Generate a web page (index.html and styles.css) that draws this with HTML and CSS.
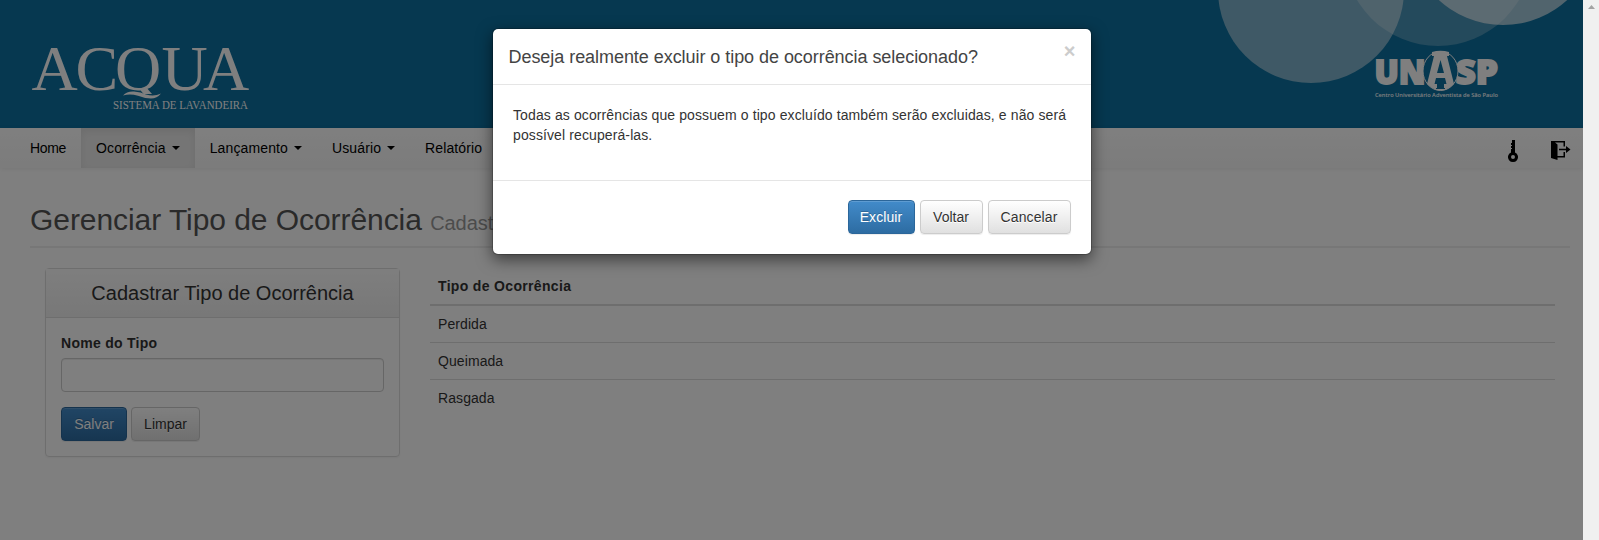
FILE: index.html
```html
<!DOCTYPE html>
<html lang="pt-BR">
<head>
<meta charset="utf-8">
<title>Acqua - Sistema de Lavandeira</title>
<link rel="stylesheet" href="styles.css">
</head>
<body>
<div class="page">
  <header class="banner">
    <svg class="banner-art" width="1583" height="128" viewBox="0 0 1583 128">
      <clipPath id="wordmark"><path d="M0 0h300v94H0z"/></clipPath>
      <circle cx="1311" cy="-10" r="93" fill="#fff" fill-opacity=".47"/>
      <circle cx="1438" cy="-48.3" r="94.3" fill="#fff" fill-opacity=".25"/>
      <circle cx="1503" cy="-70" r="95" fill="#fff" fill-opacity=".62"/>
      <g class="acqua" fill="#fff">
        <text x="31.500 75.500 115 161.500 203" y="90" font-size="64" clip-path="url(#wordmark)">ACQUA</text>
        <path d="M123 95.500q4-4.500 11-4 7 .5 12 3 8 2.500 15-1-4 5-10 5-6 0-13-2.800-8-2.500-15-.2z"/>
        <text x="113" y="108.500" font-size="12" textLength="135" lengthAdjust="spacingAndGlyphs">SISTEMA DE LAVANDEIRA</text>
      </g>
      <g class="unasp" fill="#fff">
        <text x="1374.500" y="83.500" font-size="33" textLength="51" lengthAdjust="spacingAndGlyphs" stroke="#fff" stroke-width="1.800">UN</text>
        <text x="1455.500" y="83.500" font-size="33" textLength="42.500" lengthAdjust="spacingAndGlyphs" stroke="#fff" stroke-width="1.800">SP</text>
        <ellipse cx="1440.500" cy="71" rx="17.500" ry="19.500" fill="#0c70a0" stroke="#fff"/>
        <path fill-rule="evenodd" d="M1432 52q8.500-2.500 17 0v4h-2l7 28-1 1q-12 11-25 0l-1-1 7-28h-2zM1440.500 60l-3.500 13h7zM1436 78l-1.500 6h2.500v4h-1v1h9v-1h-1v-4h2.500l-1.500-6z"/>
        <text class="unasp-sub" x="1375" y="97" font-size="5.500" textLength="123" lengthAdjust="spacingAndGlyphs">Centro Universitário Adventista de São Paulo</text>
      </g>
    </svg>
  </header>
  <nav class="navbar">
    <a class="nav-item home">Home</a>
    <a class="nav-item active">Ocorrência<b class="caret"></b></a>
    <a class="nav-item">Lançamento<b class="caret"></b></a>
    <a class="nav-item">Usuário<b class="caret"></b></a>
    <a class="nav-item">Relatório</a>
    <div class="nav-icons">
      <svg width="10" height="23" viewBox="0 0 10 23"><path fill-rule="evenodd" d="M4 0h3v12.500a5 5 0 1 1-4 0V9h1V8H3V6h1V5H3V3h1zM5 15a2 2 0 1 0 0 4 2 2 0 0 0 0-4z"/></svg>
      <svg class="exit" width="20" height="20" viewBox="0 0 20 20"><path d="M0 0h14v5.500h-1.500V1.500H4l2.500 2V19L0 17zM6 15h6.500v-4H14v5.500H6zM8 7.700h7V5l4.500 3.500L15 12V9.300H8z"/></svg>
    </div>
  </nav>
  <main class="content">
    <h1 class="page-title">Gerenciar Tipo de Ocorrência <small>Cadastrar</small></h1>
    <div class="row">
      <section class="panel">
        <h2 class="panel-title">Cadastrar Tipo de Ocorrência</h2>
        <form class="panel-body">
          <label class="label" for="nome">Nome do Tipo</label>
          <input class="input" id="nome" type="text">
          <div class="actions">
            <button class="btn primary salvar" type="button">Salvar</button>
            <button class="btn limpar" type="button">Limpar</button>
          </div>
        </form>
      </section>
      <div class="list">
        <div class="list-head">Tipo de Ocorrência</div>
        <div class="list-row first">Perdida</div>
        <div class="list-row">Queimada</div>
        <div class="list-row">Rasgada</div>
      </div>
    </div>
  </main>
</div>
<aside class="scrollbar"><i class="scroll-up"></i></aside>
<div class="backdrop"></div>
<div class="modal-layer">
  <div class="modal">
    <div class="modal-header">
      <h4 class="modal-title">Deseja realmente excluir o tipo de ocorrência selecionado?</h4>
      <button class="close" type="button">×</button>
    </div>
    <div class="modal-body">Todas as ocorrências que possuem o tipo excluído também serão excluidas, e não será<br>possível recuperá-las.</div>
    <div class="modal-footer">
      <button class="btn primary excluir" type="button">Excluir</button>
      <button class="btn voltar" type="button">Voltar</button>
      <button class="btn cancelar" type="button">Cancelar</button>
    </div>
  </div>
</div>
</body>
</html>
```
FILE: styles.css
```css
* { box-sizing: border-box; }
html, body { margin: 0; height: 100%; overflow: hidden; }
body {
  display: flex;
  background: #fff;
  color: #333;
  font: 14px/20px "Liberation Sans", Arial, sans-serif;
}
.page { width: 1583px; height: 540px; }
.banner { height: 128px; background: #0c70a0; }
.banner-art { display: block; }
.acqua { font-family: "Liberation Serif", serif; }
.unasp { font-family: "Open Sans", sans-serif; font-weight: 800; }
.unasp-sub { font-weight: 600; }

.navbar {
  display: flex;
  height: 40px;
  padding-left: 15px;
  background: linear-gradient(#fff, #f8f8f8);
  box-shadow: 0 1px 5px rgba(0, 0, 0, .075);
}
.nav-item {
  display: flex;
  align-items: center;
  padding: 0 15px;
  color: #000;
  letter-spacing: .12px;
  white-space: nowrap;
}
.nav-item.home { letter-spacing: -.33px; }
.nav-item.active { background: #ebebeb; box-shadow: inset 0 3px 9px rgba(0, 0, 0, .075); }
.caret {
  margin-left: 6px;
  border: 4px solid transparent;
  border-top-color: #000;
  border-bottom: 0;
}
.nav-icons { display: flex; gap: 33px; margin-left: auto; padding: 12px 12px 0 0; }
.exit { margin-top: 1px; }

.content { padding: 0 13px 0 30px; }
.page-title {
  height: 80px;
  margin: 0 0 20px;
  padding-top: 35px;
  border-bottom: 2px solid #eee;
  color: #555;
  font-size: 30px;
  font-weight: 400;
  letter-spacing: -.06px;
  line-height: 33px;
  white-space: nowrap;
}
.page-title small { color: #999; font-size: 20px; }
.row { display: flex; gap: 30px; padding: 0 15px; }
.panel {
  width: 355px;
  height: 189px;
  border: 1px solid #ddd;
  border-radius: 4px;
  box-shadow: 0 1px 2px rgba(0, 0, 0, .05);
}
.panel-title {
  height: 49px;
  margin: 0;
  border-bottom: 1px solid #ddd;
  background: linear-gradient(#fdfdfd, #f0f0f0);
  font-size: 20px;
  font-weight: 400;
  line-height: 49px;
  text-align: center;
}
.panel-body { padding: 15px; }
.label { display: block; margin-bottom: 5px; font-weight: 700; letter-spacing: .27px; }
.input {
  display: block;
  width: 100%;
  height: 34px;
  border: 1px solid #ccc;
  border-radius: 4px;
  background: #fff;
  box-shadow: inset 0 1px 1px rgba(0, 0, 0, .075);
}
.actions { display: flex; gap: 4px; margin-top: 15px; }
.btn {
  height: 34px;
  padding: 0;
  border: 1px solid #ccc;
  border-radius: 4px;
  background: linear-gradient(#fff, #e0e0e0);
  box-shadow: inset 0 1px 0 rgba(255, 255, 255, .15), 0 1px 1px rgba(0, 0, 0, .075);
  color: #333;
  font: 14px/20px "Liberation Sans", Arial, sans-serif;
  text-shadow: 0 1px 0 #fff;
}
.btn.primary {
  border-color: #2b669a;
  background: linear-gradient(#428bca, #2d6ca2);
  color: #fff;
  text-shadow: 0 -1px 0 rgba(0, 0, 0, .2);
}
.salvar { width: 66px; }
.limpar { width: 69px; }
.list { flex: 1; }
.list-head { height: 36px; padding: 8px; font-weight: 700; letter-spacing: .33px; }
.list-row { height: 37px; padding: 8px; border-top: 1px solid #ddd; letter-spacing: .08px; }
.list-row.first { height: 38px; border-top-width: 2px; }

.scrollbar { width: 16px; padding: 5px 0 0 5px; background: #f0f0f0; }
.scroll-up {
  display: block;
  width: 7px;
  height: 4px;
  background: #a3a3a3;
  clip-path: polygon(50% 0, 100% 100%, 0 100%);
}

.backdrop { position: absolute; top: 0; left: 0; width: 1583px; height: 540px; background: rgba(0, 0, 0, .5); }
.modal-layer { position: absolute; top: 28px; left: 0; width: 1583px; display: flex; justify-content: center; }
.modal {
  width: 600px;
  height: 227px;
  border: 1px solid rgba(0, 0, 0, .2);
  border-radius: 6px;
  background: #fff;
  background-clip: padding-box;
  box-shadow: 0 5px 15px rgba(0, 0, 0, .5);
}
.modal-header {
  display: flex;
  justify-content: space-between;
  height: 56px;
  padding: 15px 15px 0 16px;
  border-bottom: 1px solid #e5e5e5;
}
.modal-title { margin: 0; color: #444; font-size: 18px; font-weight: 400; letter-spacing: -.05px; line-height: 26px; white-space: nowrap; }
.close {
  height: 15px;
  margin: 0;
  padding: 0;
  border: 0;
  background: none;
  color: #ccc;
  font: 700 20px/15px "Liberation Sans", Arial, sans-serif;
}
.modal-body { height: 95px; padding: 20px 0 0 20.5px; letter-spacing: .11px; white-space: nowrap; }
.modal-footer {
  display: flex;
  justify-content: flex-end;
  gap: 5px;
  height: 74px;
  padding: 19px 20px 20px;
  border-top: 1px solid #e5e5e5;
}
.excluir { width: 67px; letter-spacing: .1px; }
.voltar { width: 63px; }
.cancelar { width: 83px; letter-spacing: .1px; }
```
